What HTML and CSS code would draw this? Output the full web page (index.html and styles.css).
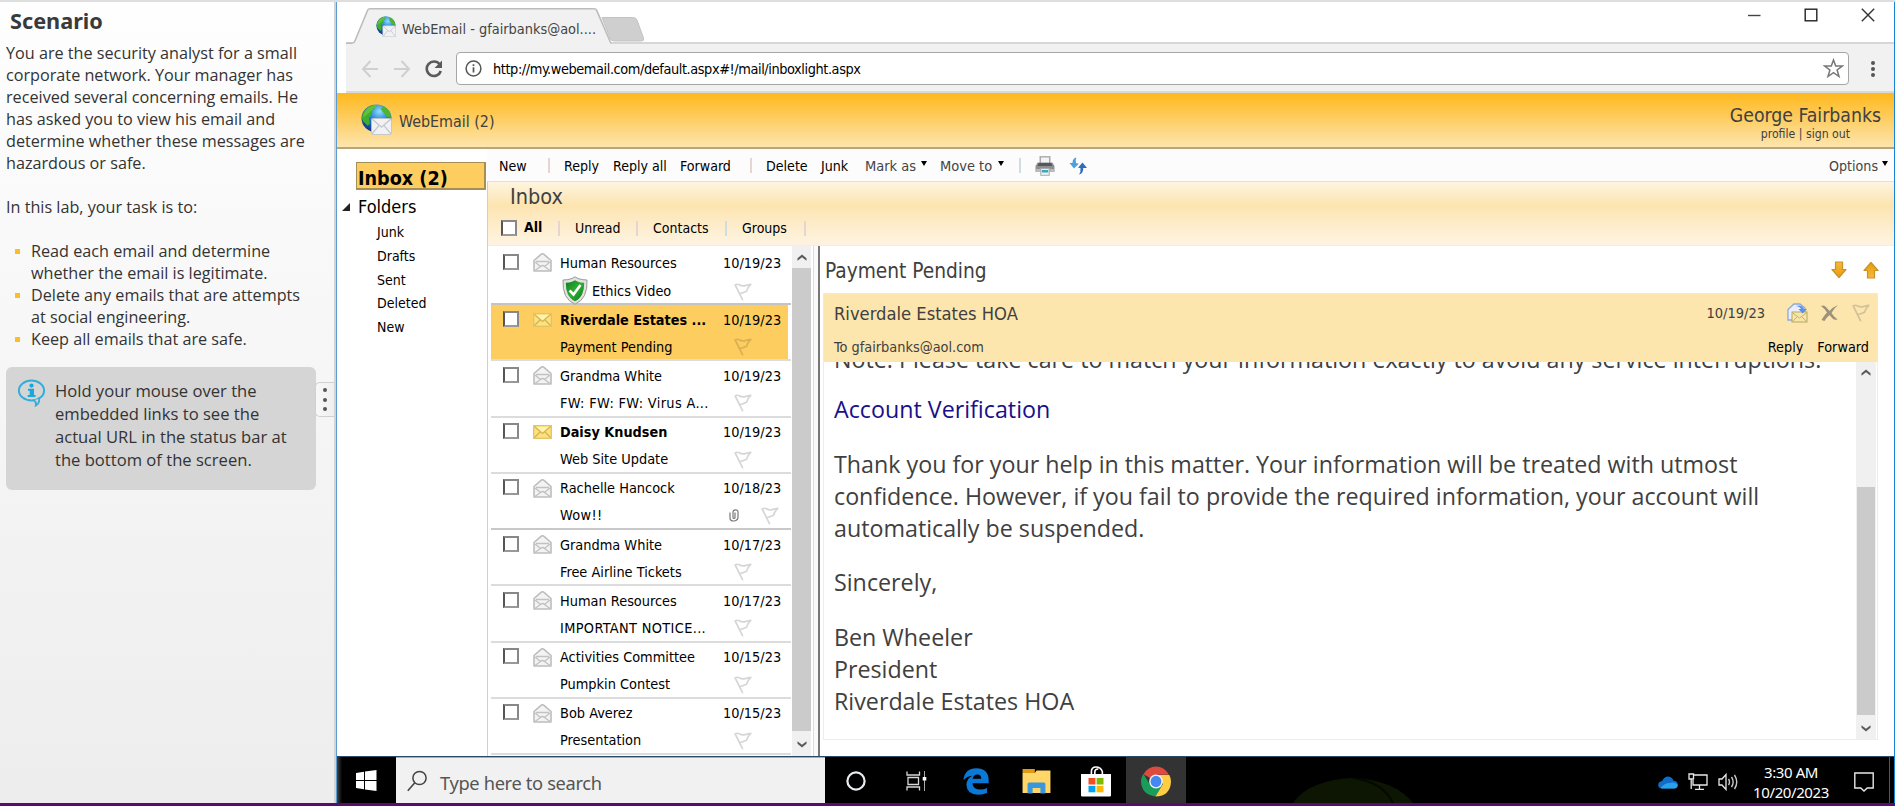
FILE: index.html
```html
<!DOCTYPE html>
<html lang="en">
<head>
<meta charset="utf-8">
<title>WebEmail</title>
<link rel="stylesheet" href="styles.css">
</head>
<body>
<svg class="defs" width="0" height="0">
  <defs>
    <radialGradient id="gGlobe" cx=".6" cy=".25" r=".8"><stop offset="0" stop-color="#8fe0fa"/><stop offset=".4" stop-color="#2a86d6"/><stop offset="1" stop-color="#0b2e8c"/></radialGradient>
    <linearGradient id="gShield" x1="0" y1="0" x2="1" y2="1"><stop offset="0" stop-color="#0e7d1c"/><stop offset=".5" stop-color="#2fae35"/><stop offset="1" stop-color="#0a7515"/></linearGradient>
    <linearGradient id="gArrow" x1="0" y1="0" x2="0" y2="1"><stop offset="0" stop-color="#f7b93a"/><stop offset="1" stop-color="#e79c0c"/></linearGradient>
    <symbol id="globe" viewBox="0 0 28 30" preserveAspectRatio="none">
      <circle cx="14" cy="14" r="13.5" fill="url(#gGlobe)"/>
      <path d="M3 7C6 2 10 1 13 1l-1 4-3 2 1 4-3 2 1 6-2 2-4-4c-2-4-1-7 1-10z" fill="#3fae2a"/>
      <path d="M20 2c4 2 7 6 7 11l-4-1-3-4-2-3z" fill="#4fb52c"/>
      <path d="M5 5c3-3 6-4 9-4l-3 4-4 4-5 4c0-3 1-6 3-8z" fill="#77cf4a" opacity=".6"/>
      <rect x="9.5" y="14" width="18" height="15.500" rx="1" fill="#f1f2f4" stroke="#bfc2c8" stroke-width=".8"/>
      <path d="M10 14.500l8.500 8 8.500-8M10 29l6.500-8.500M27 29l-6.500-8.500" fill="none" stroke="#c3c6cb" stroke-width="1.200"/>
    </symbol>
    <symbol id="opened" viewBox="0 0 19 19">
      <path d="M1 7.500L8 1.300q1.500-1 3 0L18 7.500V18H1z" fill="#f3f3f3" stroke="#bdbdbd" stroke-width="1.600" stroke-linejoin="round"/>
      <path d="M3 8.500h13M2 9l5.500 4.500L2 17.500M17 9l-5.500 4.500L17 17.500M7.500 13.500q2-2 4 0" fill="none" stroke="#c2c2c2" stroke-width="1.300"/>
    </symbol>
    <symbol id="closed" viewBox="0 0 19 14">
      <rect x=".7" y=".7" width="17.600" height="12.600" fill="#fbe27e" stroke="#e3c368" stroke-width="1.300"/>
      <path d="M1.500 1.500L9.500 8.500 17.500 1.500M1.500 12.500l6-6M17.500 12.500l-6-6" fill="none" stroke="#d6b24e" stroke-width="1.200"/>
      <path d="M3 1.700h13L9.500 7.200z" fill="#fff3b0"/>
    </symbol>
    <symbol id="flag" viewBox="0 0 18 18">
      <path d="M1.200 2q2-1.500 4.500 0t5.500.6 5.600-1.200Q13 5 12.600 8.200 9.500 9.600 6 10.800M1.200 2L8.500 16.600" fill="none" stroke="currentColor" stroke-width="1.700" stroke-linejoin="round" stroke-linecap="round"/>
    </symbol>
    <symbol id="up" viewBox="0 0 10 8"><path d="M.5 6.800V4.200L5 .4l4.500 3.800v2.600L5 3.300z" fill="#5a5a5a"/></symbol>
    <symbol id="down" viewBox="0 0 10 8"><path d="M.5 1.200v2.600L5 7.600l4.500-3.800V1.200L5 4.700z" fill="#5a5a5a"/></symbol>
    <symbol id="arrowdn" viewBox="0 0 16 18"><path d="M4.500 1h7v7.500H15L8 16.500 1 8.500h3.500z" fill="url(#gArrow)" stroke="#c8912a" stroke-width="1.200" stroke-linejoin="round"/></symbol>
  </defs>
</svg>

<div class="app">
<aside class="scenario">
  <h1>Scenario</h1>
  <p>You are the security analyst for a small<br>corporate network. Your manager has<br>received several concerning emails. He<br>has asked you to view his email and<br>determine whether these messages are<br>hazardous or safe.</p>
  <p>In this lab, your task is to:</p>
  <ul>
    <li>Read each email and determine<br>whether the email is legitimate.</li>
    <li>Delete any emails that are attempts<br>at social engineering.</li>
    <li>Keep all emails that are safe.</li>
  </ul>
  <div class="hint">
    <svg class="hint-icon" width="29" height="28" viewBox="0 0 29 28"><ellipse cx="14.500" cy="11.500" rx="12.600" ry="10" fill="none" stroke="#33add9" stroke-width="2"/><path d="M17 21.200q2.500 2 1.800 5.300 4.200-2.500 3.200-6.800" fill="#d5d5d5" stroke="#33add9" stroke-width="1.800"/><circle cx="14.500" cy="6.600" r="2.100" fill="#1aa7dc"/><path d="M11 9.700h6v6.300h1.500v2H10.700v-2h2v-4.300H11z" fill="#1aa7dc"/></svg>
    <div>Hold your mouse over the<br>embedded links to see the<br>actual URL in the status bar at<br>the bottom of the screen.</div>
  </div>
  <div class="grip"><i></i><i></i><i></i></div>
</aside>

<main class="window">
  <div class="chrome">
    <div class="tabs">
      <svg class="tabshape" width="305" height="38" viewBox="0 0 305 38">
        <path d="M256 10.500H286.500q3.500 0 4.500 2.500l6.500 18q1 3-2 3H268q-3 0-4-3z" fill="#cfcfcf" stroke="#c3c3c3"/>
        <path d="M0 36H6q2 0 3-2.500L21.500 3.500q.6-1.700 2.500-1.700H248q2 0 2.700 1.700L265 36V38H0z" fill="#f1f1f1"/>
        <path d="M0 36.300H6q2 0 3-2.500L21.500 3.500q.6-1.800 2.500-1.800H248q2 0 2.700 1.700L265 36.500" fill="none" stroke="#bdbdbd" stroke-width="1.600"/>
      </svg>
      <svg class="tabicon" width="20" height="21"><use href="#globe"/></svg>
      <span class="tabtitle">WebEmail - gfairbanks@aol....</span>
      <div class="winbtns">
        <svg width="14" height="14" viewBox="0 0 14 14"><path d="M1 7.500h12.500" stroke="#444" stroke-width="1.400"/></svg>
        <svg width="14" height="14" viewBox="0 0 14 14"><rect x="1.200" y="1.200" width="11.600" height="11.600" fill="none" stroke="#222" stroke-width="1.400"/></svg>
        <svg width="14" height="14" viewBox="0 0 14 14"><path d="M.8.8l12.400 12.400M13.200.8L.8 13.200" stroke="#333" stroke-width="1.400"/></svg>
      </div>
    </div>
    <div class="addr">
      <svg width="18" height="18" viewBox="0 0 17 18"><path d="M9 1L1.500 9 9 17M1.500 9H16.500" fill="none" stroke="#cfcfcf" stroke-width="2"/></svg>
      <svg width="18" height="18" viewBox="0 0 17 18"><path d="M8 1l7.500 8L8 17M15.500 9H.5" fill="none" stroke="#cfcfcf" stroke-width="2"/></svg>
      <svg width="18" height="18" viewBox="0 0 18 18"><path d="M14.600 4.300A7.200 7.200 0 1 0 15.800 11" fill="none" stroke="#5a5a5a" stroke-width="2.600"/><path d="M17 .5V8H9.500z" fill="#5a5a5a"/></svg>
      <div class="urlbox">
        <svg width="17" height="17" viewBox="0 0 17 17"><circle cx="8.500" cy="8.500" r="7.400" fill="none" stroke="#555" stroke-width="1.500"/><path d="M8.500 7.300v5.200M8.500 4.300v1.700" stroke="#555" stroke-width="1.700"/></svg>
        <span class="url">http://my.webemail.com/default.aspx#!/mail/inboxlight.aspx</span>
        <svg width="21" height="21" viewBox="0 0 21 21"><path d="M10.500 2l2.200 6h6.600l-5.200 4 1.900 6.500-5.500-3.900L5 18.500 6.900 12 1.700 8h6.600z" fill="none" stroke="#777" stroke-width="1.500"/></svg>
      </div>
      <div class="kebab"><i></i><i></i><i></i></div>
    </div>
  </div>

  <header class="brand">
    <svg width="31" height="31"><use href="#globe"/></svg>
    <span class="brandname">WebEmail (2)</span>
    <div class="user"><div class="uname">George Fairbanks</div><div class="ulinks">profile | sign out</div></div>
  </header>

  <div class="mail">
    <nav class="nav">
      <div class="inboxsel">Inbox (2)</div>
      <div class="folders"><svg width="8" height="8" viewBox="0 0 8 8"><path d="M8 0v8H0z" fill="#222"/></svg><span>Folders</span></div>
      <ul><li>Junk</li><li>Drafts</li><li>Sent</li><li>Deleted</li><li>New</li></ul>
    </nav>

    <section class="content">
      <div class="toolbar">
        <span>New</span><b></b><span>Reply</span><span>Reply all</span><span>Forward</span><b></b><span>Delete</span><span>Junk</span><span class="dim">Mark as</span><em></em><span class="dim">Move to</span><em></em><b></b>
        <svg width="20" height="20" viewBox="0 0 19 20" preserveAspectRatio="none"><rect x="5" y=".8" width="9" height="8" fill="#f4f4f4" stroke="#a9a9a9" stroke-width="1.400"/><path d="M2.500 6.500h14L18.500 10v6h-18v-6z" fill="#8d8f91"/><path d="M3.500 7h12l1 3h-14z" fill="#55585a"/><path d="M1 13h17v3H1z" fill="#b9bbbd"/><rect x="5.500" y="12.500" width="8" height="6.800" fill="#eef4f6" stroke="#aaa"/><path d="M6.500 14h6v2.500h-6z" fill="#35a9bd"/></svg>
        <svg width="19" height="18" viewBox="0 0 19 18"><path d="M7.500.5Q3.500 1 3.500 6H.5L5 11.500 9.800 6.800 7 6Q6 3 7.500.5z" fill="#4aa0e4"/><path d="M10 17.500q4.500-1 4.200-6.500h3.800L13.500 5.500 9 10.800l2.500.2q.5 4-1.500 6.500z" fill="#2f6cc0"/></svg>
        <span class="dim opts">Options</span><em></em>
      </div>
      <div class="banner">
        <div class="btitle">Inbox</div>
        <div class="filters"><i class="cb"></i><strong>All</strong><b></b><span>Unread</span><b></b><span>Contacts</span><b></b><span>Groups</span><b></b></div>
      </div>

      <div class="split">
        <div class="list">
          <div class="row first"><i class="cb"></i><svg class="env" width="19" height="19"><use href="#opened"/></svg><span class="who">Human Resources</span><span class="date">10/19/23</span>
            <span class="subj shielded"><svg width="26" height="29" viewBox="0 0 26 29"><path d="M13 .8l3 1.700q4 1.500 9 1.500.5 9-2.500 15.500-3 6-9.500 8.700-6.500-2.700-9.500-8.700Q.5 13 1 4q5 0 9-1.500z" fill="#e2e2e2" stroke="#989898"/><path d="M13 4.200l2.500 1.300q3 1.200 6.700 1.300.1 6.700-2 11.200-2.200 5-7.200 7.300-5-2.300-7.200-7.300-2.100-4.500-2-11.200 3.700-.1 6.700-1.300z" fill="url(#gShield)"/><path d="M7.500 14.500l4 4 7-9.500" fill="none" stroke="#fff" stroke-width="2.600"/></svg>Ethics Video</span><svg class="flag" width="18" height="18"><use href="#flag"/></svg></div>
          <div class="row sel unread"><i class="cb"></i><svg class="env" width="19" height="14"><use href="#closed"/></svg><span class="who">Riverdale Estates ...</span><span class="date">10/19/23</span><span class="subj">Payment Pending</span><svg class="flag" width="18" height="18"><use href="#flag"/></svg></div>
          <div class="row"><i class="cb"></i><svg class="env" width="19" height="19"><use href="#opened"/></svg><span class="who">Grandma White</span><span class="date">10/19/23</span><span class="subj wide">FW: FW: FW: Virus A...</span><svg class="flag" width="18" height="18"><use href="#flag"/></svg></div>
          <div class="row unread"><i class="cb"></i><svg class="env" width="19" height="14"><use href="#closed"/></svg><span class="who">Daisy Knudsen</span><span class="date">10/19/23</span><span class="subj">Web Site Update</span><svg class="flag" width="18" height="18"><use href="#flag"/></svg></div>
          <div class="row clip"><i class="cb"></i><svg class="env" width="19" height="19"><use href="#opened"/></svg><span class="who">Rachelle Hancock</span><span class="date">10/18/23</span><span class="subj wide">Wow!!</span><span class="flag pair"><svg width="10" height="13" viewBox="0 0 10 13"><path d="M1 3.500v5.200Q1 12 4.700 12T9 8.700V3Q9 .8 6.500.8T4 3v5.500q0 1 1 1t1-1v-5" fill="none" stroke="#777" stroke-width="1.200"/></svg><svg width="18" height="18"><use href="#flag"/></svg></span></div>
          <div class="row"><i class="cb"></i><svg class="env" width="19" height="19"><use href="#opened"/></svg><span class="who">Grandma White</span><span class="date">10/17/23</span><span class="subj">Free Airline Tickets</span><svg class="flag" width="18" height="18"><use href="#flag"/></svg></div>
          <div class="row"><i class="cb"></i><svg class="env" width="19" height="19"><use href="#opened"/></svg><span class="who">Human Resources</span><span class="date">10/17/23</span><span class="subj wide">IMPORTANT NOTICE...</span><svg class="flag" width="18" height="18"><use href="#flag"/></svg></div>
          <div class="row"><i class="cb"></i><svg class="env" width="19" height="19"><use href="#opened"/></svg><span class="who">Activities Committee</span><span class="date">10/15/23</span><span class="subj">Pumpkin Contest</span><svg class="flag" width="18" height="18"><use href="#flag"/></svg></div>
          <div class="row"><i class="cb"></i><svg class="env" width="19" height="19"><use href="#opened"/></svg><span class="who">Bob Averez</span><span class="date">10/15/23</span><span class="subj">Presentation</span><svg class="flag" width="18" height="18"><use href="#flag"/></svg></div>
        </div>
        <div class="scroll listscroll"><svg width="10" height="8"><use href="#up"/></svg><div class="thumb"></div><svg width="10" height="8"><use href="#down"/></svg></div>
        <div class="divider"></div>

        <article class="reader">
          <div class="rtop"><h2>Payment Pending</h2>
            <svg width="16" height="18"><use href="#arrowdn"/></svg>
            <svg width="16" height="18" class="flip"><use href="#arrowdn"/></svg>
          </div>
          <div class="rhead">
            <div class="rline"><span class="from">Riverdale Estates HOA</span><span class="rdate">10/19/23</span>
              <svg width="21" height="20" viewBox="0 0 21 20"><path d="M1 6.500L7 1h6l5 4v12H1z" fill="#e9effb" stroke="#8fa9dc" stroke-width="1.300"/><rect x="5" y="9" width="15" height="10" fill="#f6e6a8" stroke="#b9a563"/><path d="M5 9.500l7.500 5.500L20 9.500M5 19l5.500-5.500M20 19l-5.500-5.500" fill="none" stroke="#c9b36c"/><path d="M9 3q6-2 8 3h3l-4.500 4.500L11.500 6H14q-1-2.500-5-3z" fill="#5f8fe6"/></svg>
              <svg width="19" height="18" viewBox="0 0 19 18"><path d="M1 2q3-1.500 5 1l3.500 4Q13 3 18 1q-4.500 4-6.500 8 2 3.500 6 6.500-3 1-5-1l-3-3.500Q6 14 4.500 17L1.500 16q2.500-4.500 5.500-7.500Q4 4 1 2z" fill="#9c927a"/></svg>
              <svg class="rflag" width="18" height="18"><use href="#flag"/></svg>
            </div>
            <div class="rline2"><span class="to">To gfairbanks@aol.com</span><span class="ract">Reply</span><span class="ract">Forward</span></div>
          </div>
          <div class="rbody">
            <div class="msg">
              <p>Note: Please take care to match your information exactly to avoid any service interruptions.</p>
              <p><a>Account Verification</a></p>
              <p>Thank you for your help in this matter. Your information will be treated with utmost<br>confidence. However, if you fail to provide the required information, your account will<br>automatically be suspended.</p>
              <p>Sincerely,</p>
              <p>Ben Wheeler<br>President<br>Riverdale Estates HOA</p>
            </div>
            <div class="scroll bodyscroll"><svg width="10" height="8"><use href="#up"/></svg><div class="thumb"></div><svg width="10" height="8"><use href="#down"/></svg></div>
          </div>
        </article>
      </div>
    </section>
  </div>

  <footer class="taskbar">
    <div class="start"><svg width="21" height="21" viewBox="0 0 21 21"><path d="M0 3l8-1.300V10H0zM9 1.500L20.500 0v10H9zM0 11h8v8.200L0 18zM9 11h11.500v10L9 19.400z" fill="#fff"/></svg></div>
    <div class="search"><svg width="20" height="22" viewBox="0 0 20 22"><circle cx="12.500" cy="8" r="6.600" fill="none" stroke="#444" stroke-width="1.500"/><path d="M7.800 12.800L.8 20.800" stroke="#444" stroke-width="1.600"/></svg><span>Type here to search</span></div>
    <div class="apps">
      <div><svg width="20" height="20" viewBox="0 0 20 20"><circle cx="10" cy="10" r="8.600" fill="none" stroke="#e9edf2" stroke-width="2.200"/></svg></div>
      <div><svg width="21" height="20" viewBox="0 0 21 20"><path d="M1 .5V4h12.500V.5M1 19.500V16h12.500v3.500M2 6.500h10.500v7H2z" fill="none" stroke="#d8d8d8" stroke-width="1.300"/><path d="M18.500 0v20" stroke="#aaa" stroke-width="1"/><path d="M16.700 6h3.600v3.500h-3.600z" fill="#fff"/></svg></div>
      <div><svg width="26" height="27" viewBox="0 0 23 27" preserveAspectRatio="none"><path d="M.3 12Q1.500.5 11.800.3 22.500.5 22.700 12v3.200H8.300q.5 6.300 7.200 6.400 3 0 5.700-1.600v5Q18 26.800 13.500 26.800 3.500 26.500 3 17q0-6.500 5.200-9.300Q3.500 8.300.3 12zM8.500 10.800h7.700q-.2-4.200-3.700-4.200-3.300.2-4 4.200z" fill="#0a78d7" fill-rule="evenodd"/></svg></div>
      <div><svg width="29" height="25" viewBox="0 0 26 25" preserveAspectRatio="none"><path d="M.5 0h11v4h-11z" fill="#e09a12"/><path d="M.5 4h11l1.500-2.500H25.500V24H.5z" fill="#ffd667"/><path d="M5 24.500V15q0-1.500 1.500-1.500h13q1.500 0 1.500 1.500v9.500h-4.500V19h-7v5.500z" fill="#3a96dd"/></svg></div>
      <div><svg width="30" height="31" viewBox="0 0 26 31" preserveAspectRatio="none"><path d="M9 9V5.500Q9 1 13 1t5.500 4.500V9M12 9V6q0-3 3-3" fill="none" stroke="#fff" stroke-width="1.400"/><path d="M0 8h26v21.500q0 1-1 1H1q-1 0-1-1z" fill="#fff"/><path d="M6.500 12h6v6.500h-6z" fill="#f25022"/><path d="M13.500 12h6v6.500h-6z" fill="#7fba00"/><path d="M6.500 19.800h6v6.500h-6z" fill="#00a4ef"/><path d="M13.500 19.800h6v6.500h-6z" fill="#ffb900"/></svg></div>
      <div class="on"><svg width="30" height="31" viewBox="0 0 26 31" preserveAspectRatio="none"><path d="M13 15.500L2.200 8.300Q6 .5 13 .5T24.300 8.700H13z" fill="#dd4b3e"/><path d="M2 7.700Q0 11.500 0 15.500 .5 28.500 12.500 30.500L18.500 19 13 15.500 7.500 18z" fill="#1a9c5b"/><path d="M24.500 9H13l6 9-6.500 12.500Q25.500 30 26 15.500 26 12 24.500 9z" fill="#fecd44"/><ellipse cx="13" cy="15.500" rx="5.900" ry="7" fill="#f4f4f4"/><ellipse cx="13" cy="15.500" rx="4.700" ry="5.700" fill="#4688f1"/></svg></div>
    </div>
    <svg class="glow" width="124" height="25" viewBox="0 0 124 25"><path d="M2 25Q18 2 62 0q42 2 60 25z" fill="#0d1602"/><path d="M62 0q30 4 40 25" fill="none" stroke="#050800" stroke-width="2"/></svg>
    <div class="tray">
      <svg width="20" height="13" viewBox="0 0 20 13"><path d="M4 12.500Q.3 12.300.2 9 .3 5.500 4.200 5 6 .5 10 .5q4.300.3 5.500 4.300 4.200.2 4.300 4-.2 3.500-3.800 3.700z" fill="#0f6cc8"/><path d="M2.500 12q4-5 9-5 5-1.500 8 1.500.8 3.700-3.500 4H4z" fill="#2aa1e8"/></svg>
      <svg width="20" height="18" viewBox="0 0 20 18"><path d="M6 2h13v10H5V7M11.500 12v4M7 16.300h9M1 1h4.500v5H1zM3.200 6v10" fill="none" stroke="#e8e8e8" stroke-width="1.300"/></svg>
      <svg width="20" height="18" viewBox="0 0 20 18"><path d="M1 6h3l4-4.500v15L4 12H1z" fill="none" stroke="#e8e8e8" stroke-width="1.300"/><path d="M10.500 6q2 3 0 6M13.500 4q3.300 5 0 10M16.500 2q4.500 7 0 14" fill="none" stroke="#c8c8c8" stroke-width="1.400"/></svg>
      <div class="clock"><div>3:30 AM</div><div>10/20/2023</div></div>
      <svg width="20" height="20" viewBox="0 0 20 20"><path d="M.8 1h18.400v15h-6L10 19l-3.200-3h-6z" fill="none" stroke="#e8e8e8" stroke-width="1.400"/></svg>
    </div>
    <div class="peek"></div>
  </footer>
</main>
</div>
<div class="base"></div>
</body>
</html>
```

FILE: styles.css
```css
* { box-sizing: border-box; }
html, body { margin: 0; height: 806px; overflow: hidden; }
body {
  display: flex; flex-direction: column;
  background: #fff; border-top: 2px solid #dedede;
  font-family: "DejaVu Sans Condensed", "DejaVu Sans", sans-serif;
  font-size: 14px; color: #000;
}
svg { display: block; flex: none; }
.defs { position: absolute; }
.app { flex: 1; display: flex; min-height: 0; }
.base { height: 3px; background: #560d6b; }

/* scenario panel */
.scenario {
  position: relative; width: 336px; flex: none;
  border-right: 2px solid #d4d4d4;
  background: linear-gradient(#fefefe, #ededed);
  font: 16.200px/22px "Open Sans", sans-serif; color: #333; padding-left: 6px;
}
.scenario h1 { margin: 6px 0 8px 4px; font: bold 21.700px/26px "Noto Sans", sans-serif; color: #3a3a3a; }
.scenario p { margin: 0 0 22px; white-space: nowrap; }
.scenario ul { list-style: none; margin: 0; padding: 0 0 0 25px; }
.scenario li { position: relative; white-space: nowrap; }
.scenario li::before { content: ""; position: absolute; left: -16px; top: 9px; width: 5px; height: 5px; background: #fbbf24; }
.hint {
  display: flex; gap: 9px; margin-top: 17px; width: 310px; height: 123px;
  padding: 12px 0 0 11px; background: #d5d5d5; border-radius: 6px;
  font-size: 16.600px; line-height: 23px; white-space: nowrap;
}
.grip {
  position: absolute; right: 0; top: 380px; width: 19px; height: 35px;
  display: flex; flex-direction: column; align-items: center; justify-content: space-evenly;
  background: linear-gradient(90deg, #f8f8f8, #efefef); border: 1px solid #d0d0d0; border-right: 0; border-radius: 5px 0 0 5px;
}
.grip i { width: 4px; height: 4px; border-radius: 50%; background: #555; }

/* window */
.window { flex: 1; min-width: 0; display: flex; flex-direction: column; border-left: 1px solid #5b9bd0; border-right: 1px solid #1583d8; }
.chrome { margin-left: 9px; flex: none; }
.tabs { height: 42px; position: relative; display: flex; align-items: center; border-bottom: 2px solid #d6d6d6; }
.tabshape { position: absolute; left: 0; top: 5px; }
.tabicon { position: relative; margin: 9px 6px 0 30px; }
.tabtitle { position: relative; margin-top: 14px; font-size: 14.400px; color: #444; white-space: nowrap; }
.winbtns { margin-left: auto; display: flex; gap: 43px; padding: 0 19px 15px 0; }
.addr { height: 49px; background: #f1f1f1; display: flex; align-items: center; padding: 2px 19px 0 15px; border-bottom: 2px solid #d9d9d9; }
.addr > svg { margin-right: 14px; }
.addr > svg:nth-child(3) { margin-right: 13px; }
.urlbox { flex: 1; height: 33px; background: #fff; border: 1.500px solid #a6a6a6; border-radius: 4px; display: flex; align-items: center; padding: 0 4px 0 8px; }
.url { margin: 1px auto 0 11px; font-size: 14.400px; letter-spacing: -.42px; }
.kebab { width: 4px; margin-left: 22px; display: flex; flex-direction: column; gap: 2px; }
.kebab i { width: 4px; height: 4px; background: #555; border-radius: 50%; }

.brand {
  height: 56px; flex: none; display: flex; align-items: center; padding: 0 13px 2px 24px;
  background: linear-gradient(#ffb81c, #fde5ae); border-bottom: 2px solid #b8a57a; color: #404040;
}
.brandname { margin: 4px 0 0 7px; font-size: 15.900px; }
.user { margin-left: auto; text-align: center; }
.uname { font-size: 19.300px; line-height: 21px; margin-top: 9px; }
.ulinks { font-size: 12.200px; line-height: 16px; }

/* mail */
.mail { flex: 1; min-height: 0; display: flex; }
.nav { width: 150px; flex: none; padding-top: 13px; }
.inboxsel { margin-left: 19px; width: 130px; height: 28px; background: #fdcd5f; border: 1px solid #a58f55; border-right-width: 2px; border-bottom-width: 2px; font-weight: bold; font-size: 19.600px; line-height: 31px; padding-left: 1px; }
.folders { display: flex; align-items: center; gap: 8px; padding-left: 5px; height: 29px; margin-top: 2px; font-size: 18px; }
.nav ul { list-style: none; margin: 0; padding: 0 0 0 40px; line-height: 23.800px; }
.content { flex: 1; min-width: 0; display: flex; flex-direction: column; border-left: 1px solid #d0d0d0; }
.toolbar {
  height: 33px; flex: none; background: #fcfcfc; border-bottom: 1px solid #dfe0e2; margin-left: -1px; padding-left: 12px;
  display: grid; align-items: center; white-space: nowrap; padding-top: 1px; font-size: 14.100px;
  grid-template-columns: 49px 16px 49px 67px 70px 16px 55px 44px 52px 23px 54px 25px 16px 34px 19px 1fr 16px;
}
.toolbar b, .filters b { width: 2px; height: 15px; background: linear-gradient(90deg, #e6d3d3 50%, #cfdde6 50%); }
.toolbar em { width: 0; border: 3px solid transparent; border-top: 5px solid #000; border-bottom: 0; margin: -4px 0 0 4px; }
.dim { color: #444; font-size: 14.500px; }
.toolbar .opts { text-align: right; font-size: 14.100px; }
.banner { height: 64px; flex: none; background: linear-gradient(#fef4e0 0, #fde4af 24px, #fde6b6 27px, #fef3df 60px, #fff1dd); border-bottom: 1px solid #f0eee8; }
.btitle { padding-left: 22px; font-size: 21.500px; line-height: 29px; color: #404040; }
.filters { display: flex; align-items: center; height: 34px; padding-left: 13px; }
.cb { display: block; width: 16px; height: 16px; background: #fff; border: 2px solid #888; border-left-color: #555; border-bottom-color: #999; flex: none; }
.filters strong { margin: 0 0 3px 7px; width: 34px; }
.filters b { margin-right: 15px; }
.filters span { width: 61px; }
.filters span:nth-of-type(2) { width: 72px; }
.filters span:nth-of-type(3) { width: 62px; }

.split { flex: 1; min-height: 0; display: flex; overflow: hidden; }
.list { width: 301px; margin-left: 3px; flex: none; font-size: 14.400px; }
.row {
  height: 56.250px; padding-left: 12px; border-bottom: 2px solid #dcdcdc; width: 300px;
  display: grid; grid-template-columns: 30px 27px 163px 60px; grid-template-rows: 30px 24px; align-items: center; white-space: nowrap;
}
.row.first { height: 59px; grid-template-rows: 34px 23px; border-bottom-color: #c4c4c4; }
.row.clip { border-bottom-color: #c8c8c8; }
.row.sel { background: linear-gradient(#fdcd5f, #fdcd5f) 0 0 / 297px 100% no-repeat; background-clip: padding-box; }
.row .cb { margin-bottom: 3px; }
.row .env { margin-bottom: 1px; }
.row .date { line-height: 18px; margin-top: -1px; }
.who, .subj { margin-top: -1px; }
.subj { grid-column: 3; }
.wide { letter-spacing: .35px; }
.shielded { display: flex; align-items: center; gap: 4px; margin: -2px 0 0 2px; height: 23px; }
.flag { color: #d6d6d6; margin-left: 11px; }
.sel .flag { color: #dab052; }
.unread .who { font-weight: bold; font-size: 14.300px; }
.pair { display: flex; align-items: center; gap: 22px; margin-left: 6px; }

.scroll { background: #f0f0f0; display: flex; flex-direction: column; align-items: center; }
.scroll .thumb { width: 100%; background: #cbcbcb; }
.listscroll { width: 19px; padding: 8px 0; }
.listscroll .thumb { flex: 1; margin: 6px 0 9px; }
.divider { width: 7px; border-left: 1px solid #ddd; border-right: 2px solid #777; background: #fafafa; margin-left: 2px; }
.reader { flex: 1; min-width: 0; margin-left: 3px; display: flex; flex-direction: column; }
.rtop { height: 47px; flex: none; display: flex; align-items: center; gap: 16px; padding-right: 15px; color: #404040; }
.rtop h2 { margin: 3px auto 0 2px; font-size: 20.700px; font-weight: normal; }
.flip { transform: scaleY(-1); }
.rhead { height: 69px; flex: none; margin-right: 16px; background: #fde5ae; border: 1px solid #efe9dc; border-bottom: 0; padding: 0 7px 0 10px; color: #404040; }
.rline { height: 38px; display: flex; align-items: center; }
.from { font-size: 18.200px; margin: 1px auto 0 0; }
.rdate { margin: 0 22px 0 0; font-size: 14.500px; }
.rline svg + svg { margin-left: 12px; }
.rline svg + .rflag { color: #d2c29a; margin-left: 13px; }
.rline2 { height: 30px; display: flex; align-items: center; padding-right: 1px; }
.to { font-size: 14.400px; margin-right: auto; }
.ract { color: #000; margin-left: 14px; font-size: 14.300px; }
.rbody { height: 378px; flex: none; margin-right: 16px; border: solid #ededed; border-width: 0 1px 1px; overflow: hidden; display: flex; }
.msg { flex: 1; margin-top: -19px; padding-left: 10px; font: 23.250px/32px "Open Sans", sans-serif; color: #404040; white-space: nowrap; }
.msg p { margin: 0 0 22.600px; }
.msg p:first-child { margin-bottom: 18px; }
.msg a { color: #17108a; }
.bodyscroll { width: 20px; padding: 7px 0; margin-right: 1px; }
.bodyscroll .thumb { height: 231px; margin: 110px 0 9px; width: 18px; }

/* taskbar */
.taskbar { position: relative; height: 47px; flex: none; background: #000; border-top: 1px solid #2b4a66; display: flex; }
.start { width: 59px; display: flex; align-items: center; justify-content: center; background: linear-gradient(90deg, #444, #000 5px); }
.search { width: 429px; background: #f1f1f1; border-top: 1px solid #9fb0bd; display: flex; align-items: center; gap: 13px; padding: 0 0 0 11px; font: 18.300px/24px "Noto Sans", sans-serif; letter-spacing: -.35px; color: #555; }
.search span { margin-top: 5px; }
.apps { display: flex; padding-left: 1px; }
.apps div { width: 60px; display: flex; align-items: center; justify-content: center; padding-top: 2px; }
.apps .on { background: #333; }
.glow { margin: 21px 0 0 105px; }
.tray { margin-left: auto; display: flex; align-items: center; padding: 4px 20px 0 0; gap: 10px; }
.clock { width: 82px; margin: 0 12px 0 2px; font: 15px/20px "Noto Sans", sans-serif; letter-spacing: -.4px; color: #fff; text-align: center; white-space: nowrap; }
.peek { position: absolute; right: 4px; top: 0; bottom: 0; width: 1px; background: #555; }
```
